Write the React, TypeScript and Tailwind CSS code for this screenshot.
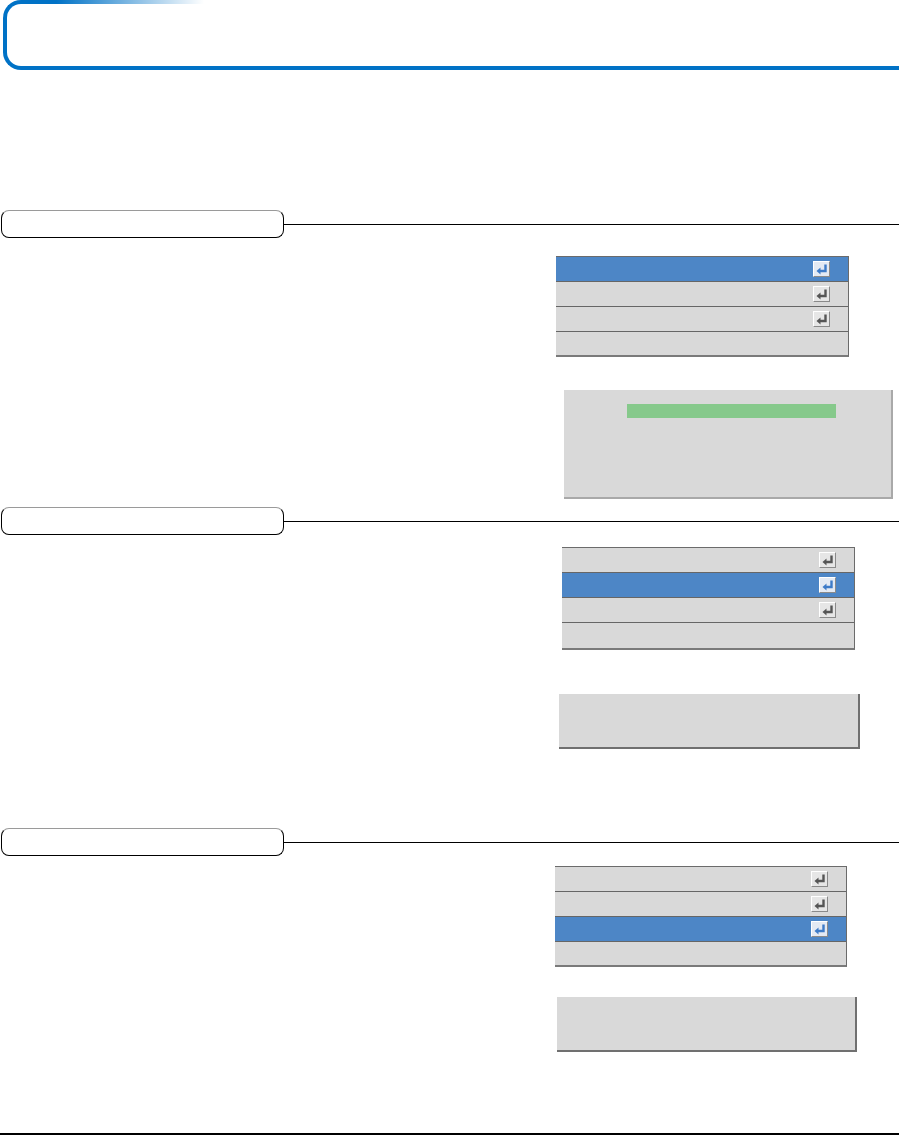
import React from 'react';

const EnterIcon: React.FC<{ active?: boolean }> = ({ active }) => (
  <div
    className={`h-[16px] w-[17px] border border-t-white border-l-white border-r-[#8a8a8a] border-b-[#8a8a8a] flex items-center justify-center ${
      active ? 'bg-[#e4eaf3]' : 'bg-[#e6e6e6]'
    }`}
  >
    <svg width="14" height="13" viewBox="0 0 14 13">
      <path
        d="M10.5 1.5 V8 H5"
        fill="none"
        stroke={active ? '#3d7bc8' : '#555555'}
        strokeWidth="2.4"
      />
      <polygon points="1.5,8 5.5,4.5 5.5,11.5" fill={active ? '#3d7bc8' : '#555555'} />
    </svg>
  </div>
);

interface MenuProps {
  left: string;
  width: string;
  top: string;
  selected: number;
  lastRow: string;
}

const Menu: React.FC<MenuProps> = ({ left, width, top, selected, lastRow }) => {
  const rows = [0, 1, 2, 3];
  return (
    <div className={`${left} ${width} ${top} border-t border-r border-b-2 border-t-[#6b6b6b] border-r-[#6b6b6b] border-b-[#7a7a7a] flex flex-col`}>
      {rows.map((i) => (
        <div
          key={i}
          className={`flex items-center justify-end pr-[18px] ${
            i < 3 ? 'h-[25px] border-b border-[#666666]' : lastRow
          } ${i === selected ? 'bg-[#4d86c6]' : 'bg-[#d9d9d9]'}`}
        >
          {i < 3 && <EnterIcon active={i === selected} />}
        </div>
      ))}
    </div>
  );
};

const SectionBar: React.FC<{ top: string }> = ({ top }) => (
  <div className={`flex items-center ${top}`}>
    <div className="ml-px h-[28px] w-[283px] shrink-0 rounded-[8px] border border-black border-t-[#9a9a9a] bg-white" />
    <div className="h-px flex-1 bg-black" />
  </div>
);

export default function App() {
  return (
    <div className="relative flex h-[1135px] w-[899px] flex-col overflow-hidden bg-white">
      {/* header frame */}
      <div className="relative ml-[3px] h-[70px] rounded-l-[18px] border-4 border-r-0 border-[#0072c6]">
        <div className="absolute -top-[4px] left-[49px] right-0 h-[4px] bg-[linear-gradient(to_right,rgba(255,255,255,0)_0px,#ffffff_148px)]" />
      </div>

      <SectionBar top="mt-[140px]" />
      <Menu left="ml-[556px]" width="w-[293px]" top="mt-[18px]" selected={0} lastRow="h-[23px]" />
      <div className="ml-[564px] mt-[33px] h-[109px] w-[329px] border-r-2 border-b-2 border-[#a9a9a9] bg-[#d9d9d9] pt-[14px] pl-[63px]">
        <div className="h-[14px] w-[209px] bg-[#86c98b]" />
      </div>

      <SectionBar top="mt-[8px]" />
      <Menu left="ml-[562px]" width="w-[293px]" top="mt-[12px]" selected={1} lastRow="h-[25px]" />
      <div className="ml-[559px] mt-[44px] h-[55px] w-[301px] border-r-2 border-b-2 border-[#707070] bg-[#d9d9d9]" />

      <SectionBar top="mt-[79px]" />
      <Menu left="ml-[555px]" width="w-[292px]" top="mt-[10px]" selected={2} lastRow="h-[23px]" />
      <div className="ml-[557px] mt-[30px] h-[55px] w-[300px] border-r-2 border-b-2 border-[#707070] bg-[#d9d9d9]" />

      <div className="mt-auto h-[2px] w-full bg-black" />
    </div>
  );
}
